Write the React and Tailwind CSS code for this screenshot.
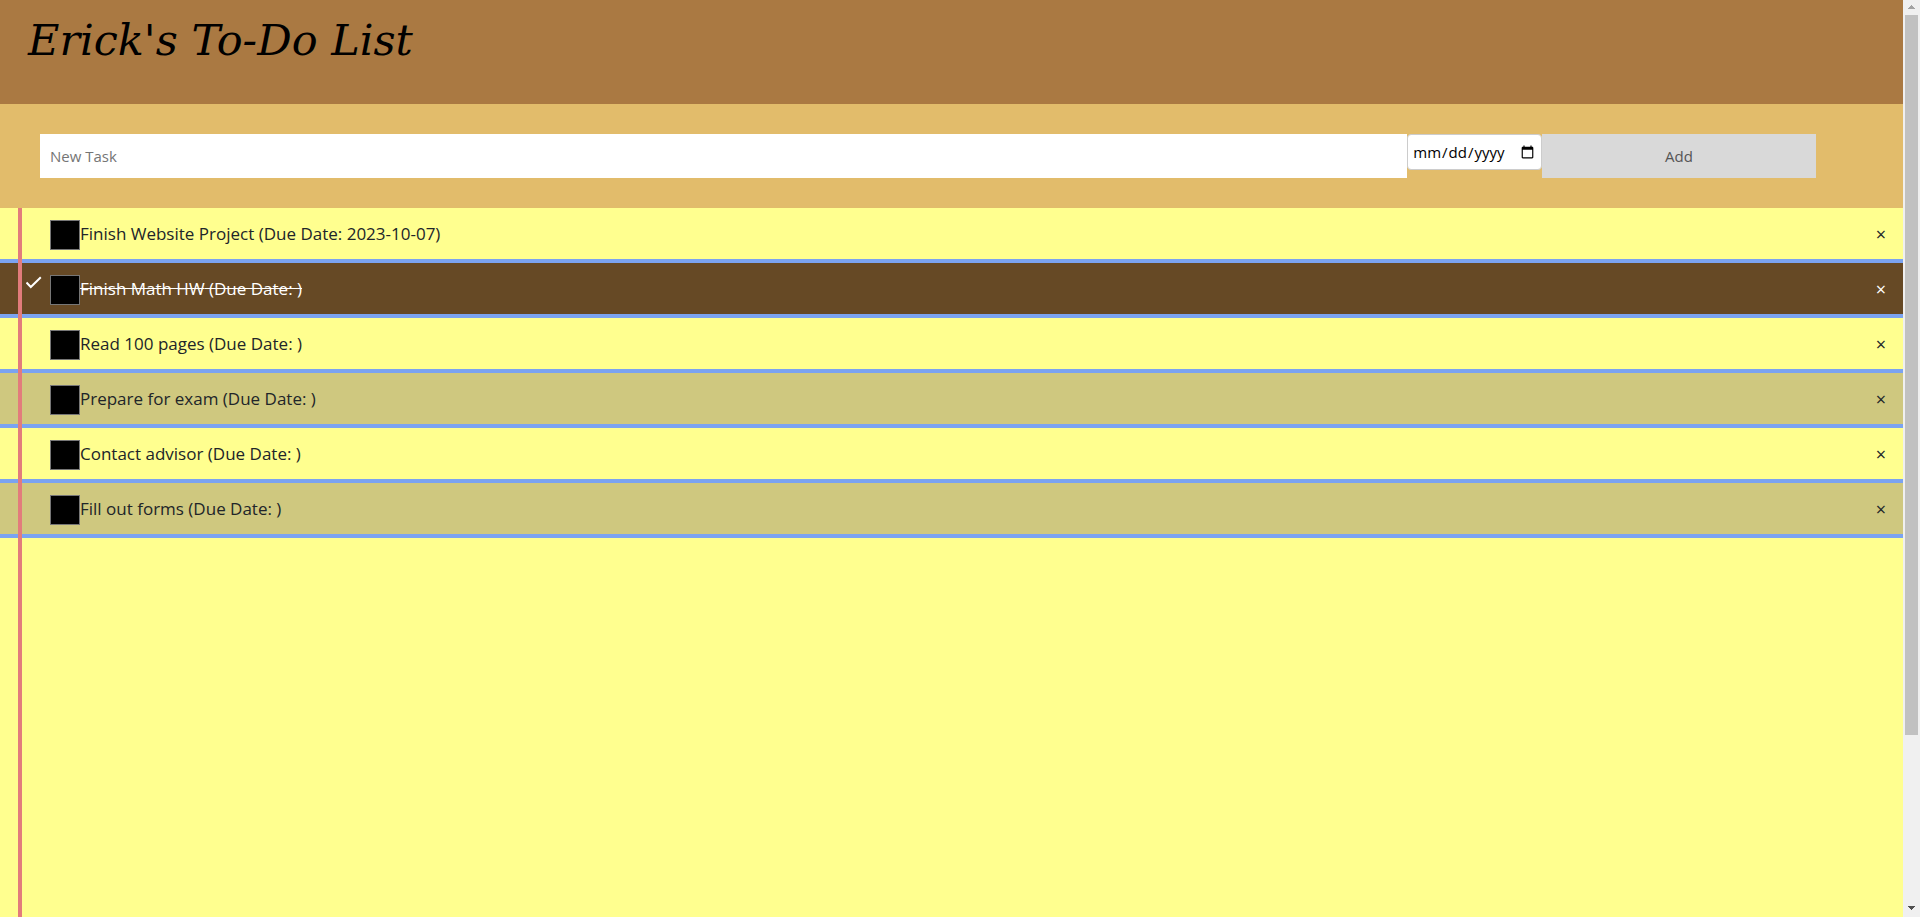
import { useState } from "react";

const initialTasks = [
  { id: 1, title: "Finish Website Project", due: "2023-10-07", done: false },
  { id: 2, title: "Finish Math HW", due: "", done: true },
  { id: 3, title: "Read 100 pages", due: "", done: false },
  { id: 4, title: "Prepare for exam", due: "", done: false },
  { id: 5, title: "Contact advisor", due: "", done: false },
  { id: 6, title: "Fill out forms", due: "", done: false },
];

function Tick() {
  return (
    <svg className="size-4" viewBox="0 0 16 16" fill="none" stroke="white" strokeWidth="2" aria-hidden="true">
      <path d="M0.5 7.5 L4.8 12 L14.8 2.3" />
    </svg>
  );
}

function Task({ task, onToggle, onRemove }) {
  const look = task.done
    ? "bg-[#664925] text-white"
    : "text-[#212529] odd:bg-[#ffff8f] even:bg-[#cfc87f]";
  return (
    <li className={`flex h-[55px] items-center border-b-4 border-[#7ba3f0] pl-[22px] pr-2 ${look}`}>
      <span className="flex w-7 shrink-0 pb-3 pl-1">{task.done && <Tick />}</span>
      <input
        id={`task-${task.id}`}
        type="checkbox"
        checked={task.done}
        onChange={onToggle}
        className="mt-[3px] size-[30px] shrink-0 appearance-none border border-[#767676] bg-black"
      />
      <label
        htmlFor={`task-${task.id}`}
        className={`flex-1 text-[17px] leading-6 ${task.done ? "line-through" : ""}`}
      >
        {task.title} (Due Date: {task.due})
      </label>
      <button
        type="button"
        aria-label={`Remove ${task.title}`}
        onClick={onRemove}
        className="w-7 text-center text-[18px] leading-6"
      >
        ×
      </button>
    </li>
  );
}

function ScrollRail() {
  return (
    <div className="flex w-[17px] shrink-0 flex-col items-center bg-[#f0f0f0]" aria-hidden="true">
      <svg className="h-[15px] w-[7px]" viewBox="0 0 7 15" fill="#a3a3a3" shapeRendering="crispEdges">
        <path d="M3 5h1v1h1v1h1v1h1v1H0V8h1V7h1V6h1z" />
      </svg>
      <div className="w-[13px] grow-[720] bg-[#c1c1c1]" />
      <div className="grow-[165]" />
      <svg className="h-[17px] w-[7px]" viewBox="0 0 7 17" fill="#505050" shapeRendering="crispEdges">
        <path d="M0 6h7v1H6v1H5v1H4v1H3V9H2V8H1V7H0z" />
      </svg>
    </div>
  );
}

export default function App() {
  const [tasks, setTasks] = useState(initialTasks);
  const [title, setTitle] = useState("");
  const [due, setDue] = useState("");

  const add = (event) => {
    event.preventDefault();
    if (!title) return;
    setTasks([...tasks, { id: Date.now(), title, due, done: false }]);
    setTitle("");
    setDue("");
  };

  return (
    <div className="flex min-h-screen font-['Segoe_UI','Open_Sans',sans-serif]">
      <div className="flex min-w-0 flex-1 flex-col bg-[#ffff8f]">
        <header className="h-[104px] bg-[#aa7942] px-7 pt-3">
          <h1 className="font-['Lucida_Handwriting','DejaVu_Serif',cursive] text-[43px] italic leading-[56px] text-black">
            Erick's To-Do List
          </h1>
        </header>
        <form onSubmit={add} className="flex h-[104px] items-start bg-[#e2bc6b] px-10 py-[30px]">
          <input
            aria-label="New Task"
            placeholder="New Task"
            value={title}
            onChange={(e) => setTitle(e.target.value)}
            className="h-11 w-3/4 bg-white px-[10px] text-[15px] text-[#212529] placeholder:text-[#757575]"
          />
          <input
            type="date"
            aria-label="Due date"
            value={due}
            onChange={(e) => setDue(e.target.value)}
            className="h-9 w-[135px] rounded border border-[#cccccc] bg-white px-1 text-[15px] text-black"
          />
          <button type="submit" className="h-11 w-[15%] bg-[#d9d9d9] text-[15px] text-[#555555]">
            Add
          </button>
        </form>
        <main className="relative flex-1">
          <ul>
            {tasks.map((task) => (
              <Task
                key={task.id}
                task={task}
                onToggle={() =>
                  setTasks(tasks.map((t) => (t.id === task.id ? { ...t, done: !t.done } : t)))
                }
                onRemove={() => setTasks(tasks.filter((t) => t.id !== task.id))}
              />
            ))}
          </ul>
          <div className="pointer-events-none absolute inset-y-0 left-[18px] w-1 bg-[#e27c7c]" />
        </main>
      </div>
      <ScrollRail />
    </div>
  );
}
